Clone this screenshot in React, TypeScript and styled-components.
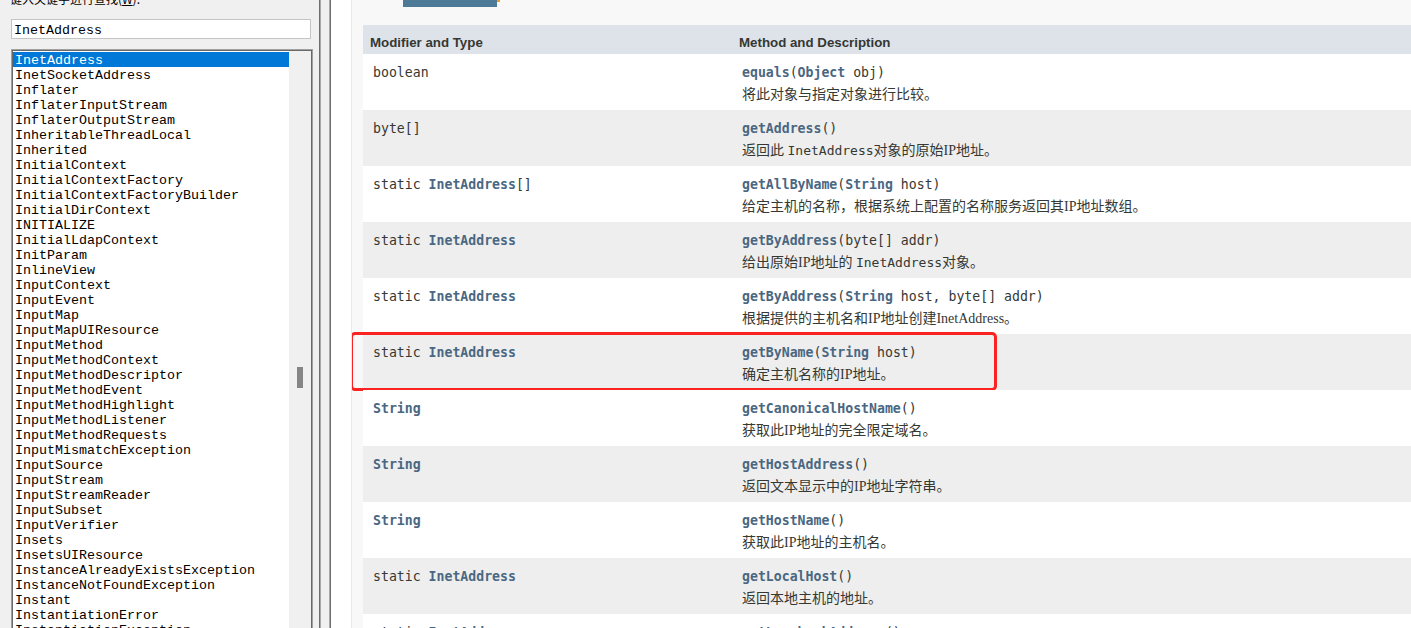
import React from "react";
import styled, { createGlobalStyle } from "styled-components";

const GlobalStyle = createGlobalStyle`
  html, body {
    margin: 0;
    padding: 0;
    width: 1411px;
    height: 628px;
    overflow: hidden;
    background: #f0f0f0;
  }
  #root { height: 628px; }
`;

const MONO = `"DejaVu Sans Mono", monospace`;
const LIST_MONO = `"Liberation Mono", monospace`;

const Page = styled.div`
  display: flex;
  width: 1411px;
  height: 628px;
  overflow: hidden;
`;

const Sidebar = styled.aside`
  width: 313px;
  flex: none;
  box-sizing: border-box;
  background: #f0f0f0;
  padding-left: 10px;
  display: flex;
  flex-direction: column;
  min-height: 0;
`;

const SearchLabel = styled.div`
  margin-top: -8px;
  height: 14px;
  line-height: 14px;
  font-family: "Noto Sans CJK SC", sans-serif;
  font-size: 12px;
  color: #000;
  white-space: nowrap;
  u { text-decoration: underline; }
`;

const SearchBox = styled.div`
  margin-top: 13px;
  margin-left: 1px;
  width: 300px;
  height: 20px;
  box-sizing: border-box;
  border: 1px solid #c4c4c4;
  background: #fff;
  padding: 3px 0 0 2px;
  font-family: ${LIST_MONO};
  font-size: 13.33px;
  line-height: 15px;
  color: #000;
`;

const ListBox = styled.div`
  margin-top: 10px;
  margin-left: 1px;
  width: 302px;
  flex: 1;
  min-height: 0;
  box-sizing: border-box;
  border: 1px solid #a0a0a0;
  border-bottom: none;
  padding: 1px 1px 0 1px;
  box-shadow: inset 1px 1px 0 #696969, inset -1px 0 0 #696969;
  display: flex;
  overflow: hidden;
`;

const ListArea = styled.div`
  flex: 1;
  background: #fff;
  padding-top: 1px;
  overflow: hidden;
`;

const ListItem = styled.div<{ $selected?: boolean }>`
  height: 15px;
  line-height: 17px;
  padding-left: 2px;
  font-family: ${LIST_MONO};
  font-size: 13.33px;
  white-space: nowrap;
  overflow: hidden;
  color: ${(p) => (p.$selected ? "#fff" : "#000")};
  background: ${(p) => (p.$selected ? "#0078d7" : "transparent")};
`;

const ScrollTrack = styled.div`
  width: 22px;
  flex: none;
  background: #f0f0f0;
  display: flex;
  flex-direction: column;
`;

const ScrollThumb = styled.div`
  margin-top: 316px;
  margin-left: 8px;
  width: 6px;
  height: 21px;
  background: #858585;
`;

const Splitter = styled.div`
  width: 38px;
  flex: none;
  display: flex;
`;

const SashMargin = styled.div`
  width: 6px;
  background: #f0f0f0;
`;

const Sash = styled.div`
  width: 12px;
  box-sizing: border-box;
  background: #f0f0f0;
  border-left: 1px solid #6e6e6e;
  border-right: 1px solid #6e6e6e;
  box-shadow: inset 1px 0 0 #a8a8a8, inset -1px 0 0 #a8a8a8;
`;

const SashGutter = styled.div`
  flex: 1;
  background: #fff;
`;

const Content = styled.main`
  flex: 1;
  min-width: 0;
  background: #f8f8f8;
  border-left: 1px solid #e8e8e8;
  padding-left: 11px;
  overflow: hidden;
`;

const Caption = styled.div`
  display: flex;
  align-items: flex-start;
  margin-left: 40px;
  height: 7px;
`;

const CaptionTab = styled.div`
  width: 94px;
  height: 7px;
  background: #4d7a97;
`;

const CaptionCorner = styled.div`
  width: 3px;
  height: 2px;
  background: #f8981d;
`;

const Table = styled.div`
  margin-top: 18px;
  display: flex;
  flex-direction: column;
`;

const HeaderRow = styled.div`
  display: flex;
  height: 29px;
  background: #dee3e9;
`;

const HeaderCell = styled.div<{ $first?: boolean }>`
  box-sizing: border-box;
  width: ${(p) => (p.$first ? "369px" : "auto")};
  flex: ${(p) => (p.$first ? "none" : "1")};
  padding: 9px 0 0 7px;
  line-height: 17px;
  font-family: "Liberation Sans", Arial, sans-serif;
  font-weight: bold;
  font-size: 13.3px;
  color: #353833;
  white-space: nowrap;
`;

const Row = styled.div<{ $alt?: boolean }>`
  position: relative;
  display: flex;
  height: 56px;
  flex: none;
  background: ${(p) => (p.$alt ? "#eeeeee" : "#ffffff")};
`;

const TypeCell = styled.div`
  box-sizing: border-box;
  width: 369px;
  flex: none;
  padding: 10px 0 0 10px;
  font-family: ${MONO};
  font-size: 13.2px;
  line-height: 18px;
  color: #353833;
  white-space: nowrap;
`;

const MethodCell = styled.div`
  flex: 1;
  min-width: 0;
  box-sizing: border-box;
  padding: 10px 0 0 10px;
`;

const Signature = styled.div`
  font-family: ${MONO};
  font-size: 13.2px;
  line-height: 18px;
  color: #353833;
  white-space: nowrap;
`;

const Desc = styled.div`
  margin-top: 4px;
  font-family: "Liberation Serif", "Noto Sans CJK SC", serif;
  font-size: 14px;
  line-height: 18px;
  color: #353833;
  white-space: nowrap;
`;

const Link = styled.span`
  font-weight: bold;
  color: #4a6782;
`;

const Code = styled.span`
  font-family: ${MONO};
  font-size: 13px;
`;

const Highlight = styled.div`
  position: absolute;
  left: -13px;
  top: -2px;
  width: 647px;
  height: 59px;
  box-sizing: border-box;
  border: 3px solid #fb2222;
  border-radius: 5px;
  pointer-events: none;
`;

const classes = [
  "InetAddress",
  "InetSocketAddress",
  "Inflater",
  "InflaterInputStream",
  "InflaterOutputStream",
  "InheritableThreadLocal",
  "Inherited",
  "InitialContext",
  "InitialContextFactory",
  "InitialContextFactoryBuilder",
  "InitialDirContext",
  "INITIALIZE",
  "InitialLdapContext",
  "InitParam",
  "InlineView",
  "InputContext",
  "InputEvent",
  "InputMap",
  "InputMapUIResource",
  "InputMethod",
  "InputMethodContext",
  "InputMethodDescriptor",
  "InputMethodEvent",
  "InputMethodHighlight",
  "InputMethodListener",
  "InputMethodRequests",
  "InputMismatchException",
  "InputSource",
  "InputStream",
  "InputStreamReader",
  "InputSubset",
  "InputVerifier",
  "Insets",
  "InsetsUIResource",
  "InstanceAlreadyExistsException",
  "InstanceNotFoundException",
  "Instant",
  "InstantiationError",
  "InstantiationException",
];

type MethodRow = {
  type: React.ReactNode;
  sig: React.ReactNode;
  desc: React.ReactNode;
  highlight?: boolean;
};

const StaticInet = (
  <>
    static <Link>InetAddress</Link>
  </>
);

const rows: MethodRow[] = [
  {
    type: "boolean",
    sig: (
      <>
        <Link>equals</Link>(<Link>Object</Link> obj)
      </>
    ),
    desc: "将此对象与指定对象进行比较。",
  },
  {
    type: "byte[]",
    sig: (
      <>
        <Link>getAddress</Link>()
      </>
    ),
    desc: (
      <>
        返回此 <Code>InetAddress</Code>对象的原始IP地址。
      </>
    ),
  },
  {
    type: (
      <>
        static <Link>InetAddress</Link>[]
      </>
    ),
    sig: (
      <>
        <Link>getAllByName</Link>(<Link>String</Link> host)
      </>
    ),
    desc: "给定主机的名称，根据系统上配置的名称服务返回其IP地址数组。",
  },
  {
    type: StaticInet,
    sig: (
      <>
        <Link>getByAddress</Link>(byte[] addr)
      </>
    ),
    desc: (
      <>
        给出原始IP地址的 <Code>InetAddress</Code>对象。
      </>
    ),
  },
  {
    type: StaticInet,
    sig: (
      <>
        <Link>getByAddress</Link>(<Link>String</Link> host, byte[] addr)
      </>
    ),
    desc: "根据提供的主机名和IP地址创建InetAddress。",
  },
  {
    type: StaticInet,
    sig: (
      <>
        <Link>getByName</Link>(<Link>String</Link> host)
      </>
    ),
    desc: "确定主机名称的IP地址。",
    highlight: true,
  },
  {
    type: <Link>String</Link>,
    sig: (
      <>
        <Link>getCanonicalHostName</Link>()
      </>
    ),
    desc: "获取此IP地址的完全限定域名。",
  },
  {
    type: <Link>String</Link>,
    sig: (
      <>
        <Link>getHostAddress</Link>()
      </>
    ),
    desc: "返回文本显示中的IP地址字符串。",
  },
  {
    type: <Link>String</Link>,
    sig: (
      <>
        <Link>getHostName</Link>()
      </>
    ),
    desc: "获取此IP地址的主机名。",
  },
  {
    type: StaticInet,
    sig: (
      <>
        <Link>getLocalHost</Link>()
      </>
    ),
    desc: "返回本地主机的地址。",
  },
  {
    type: StaticInet,
    sig: (
      <>
        <Link>getLoopbackAddress</Link>()
      </>
    ),
    desc: "返回回送地址。",
  },
];

export default function App() {
  return (
    <>
      <GlobalStyle />
      <Page>
        <Sidebar>
          <SearchLabel>
            键入关键字进行查找(<u>W</u>):
          </SearchLabel>
          <SearchBox>InetAddress</SearchBox>
          <ListBox>
            <ListArea>
              {classes.map((c, i) => (
                <ListItem key={c} $selected={i === 0}>
                  {c}
                </ListItem>
              ))}
            </ListArea>
            <ScrollTrack>
              <ScrollThumb />
            </ScrollTrack>
          </ListBox>
        </Sidebar>
        <Splitter>
          <SashMargin />
          <Sash />
          <SashGutter />
        </Splitter>
        <Content>
          <Caption>
            <CaptionTab />
            <CaptionCorner />
          </Caption>
          <Table>
            <HeaderRow>
              <HeaderCell $first>Modifier and Type</HeaderCell>
              <HeaderCell>Method and Description</HeaderCell>
            </HeaderRow>
            {rows.map((r, i) => (
              <Row key={i} $alt={i % 2 === 1}>
                <TypeCell>{r.type}</TypeCell>
                <MethodCell>
                  <Signature>{r.sig}</Signature>
                  <Desc>{r.desc}</Desc>
                </MethodCell>
                {r.highlight && <Highlight />}
              </Row>
            ))}
          </Table>
        </Content>
      </Page>
    </>
  );
}
